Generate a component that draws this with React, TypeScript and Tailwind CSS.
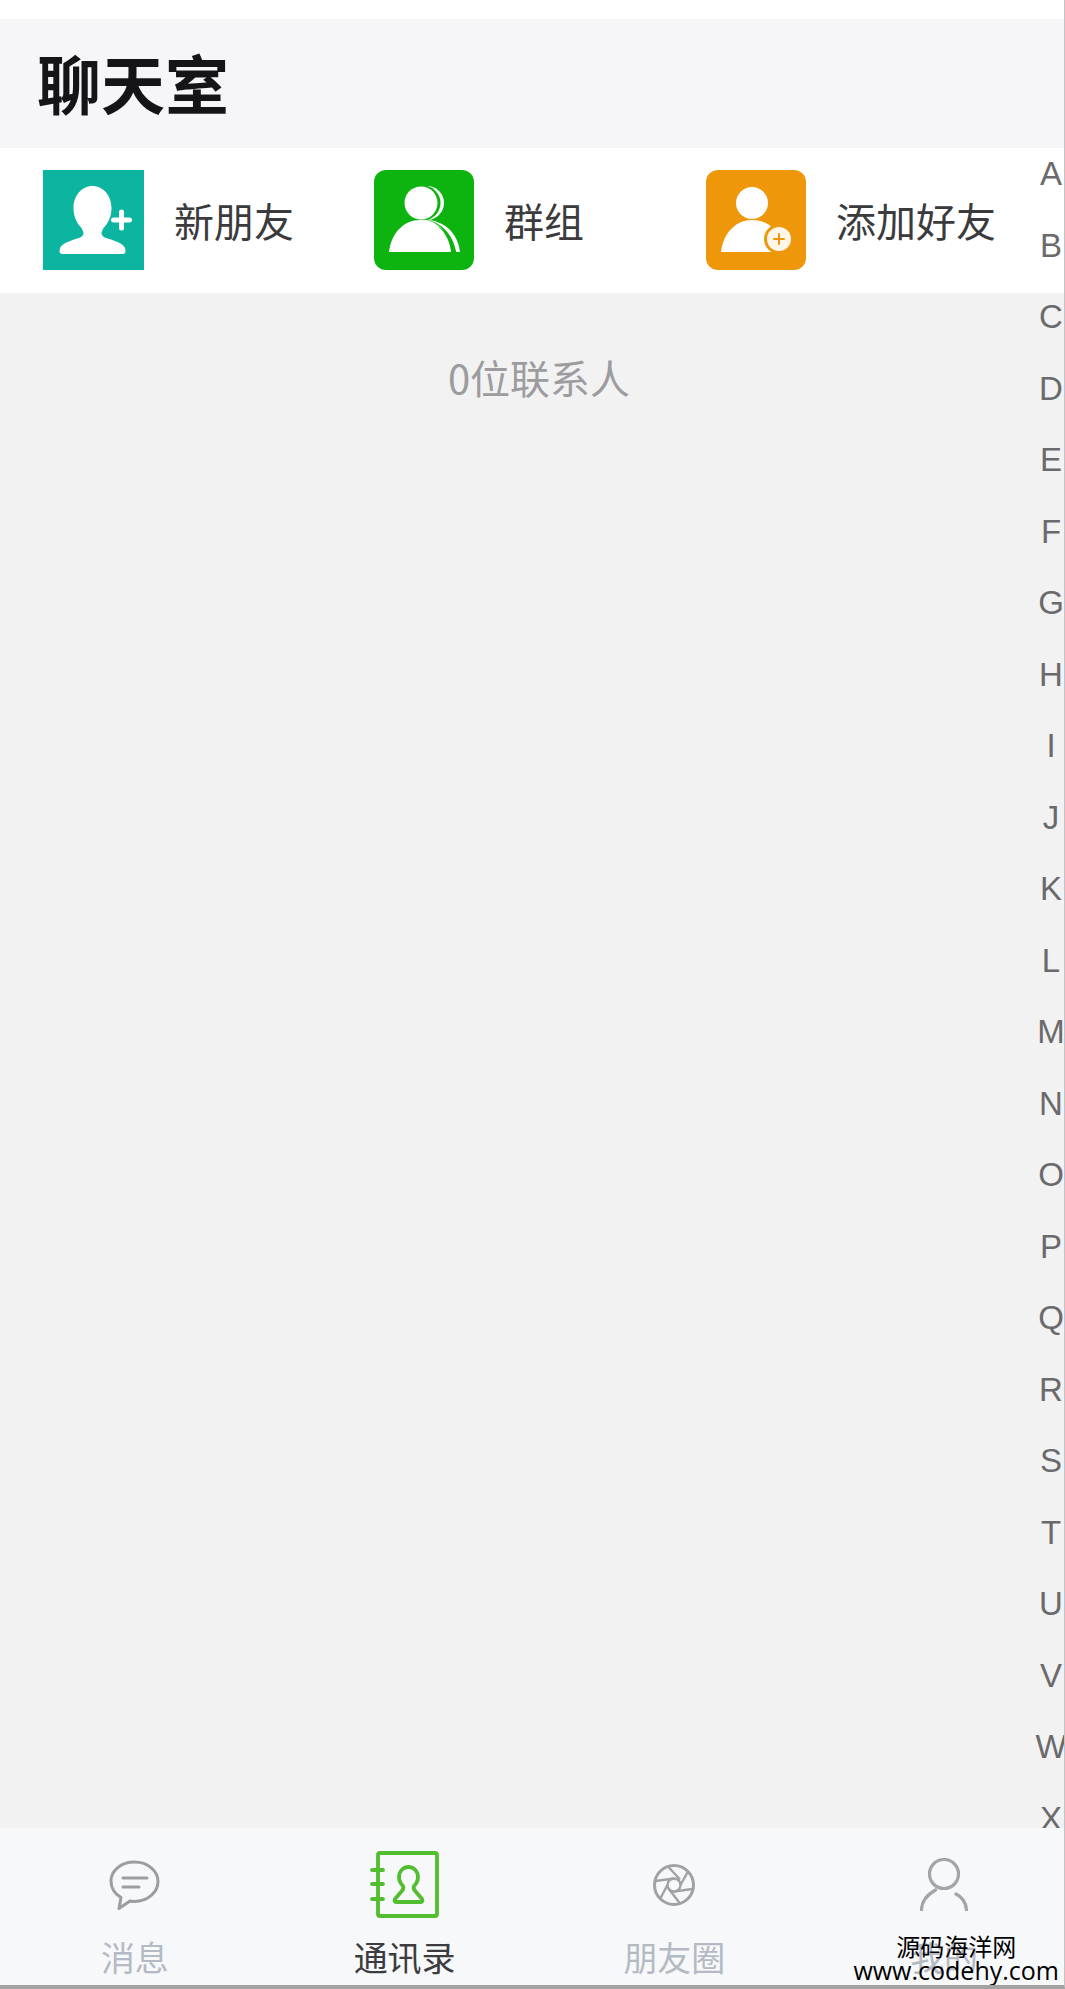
const CJK = "font-['Noto_Sans_CJK_SC','Noto_Sans',sans-serif]";
const letters = "ABCDEFGHIJKLMNOPQRSTUVWXYZ".split("");

function NewFriendIcon() {
  return (
    <svg viewBox="0 0 100 100" className="w-full h-full">
      <path fill="#fff" d="M49 16c-11 0-19 10-19 22 0 8 3 15 8 20 1 2 2 4 2 5 0 3-3 5-8 6-8 3-16 5-16 12 0 2 1 3 3 3h60c2 0 3-1 3-3 0-7-8-9-16-12-5-1-8-3-8-6 0-1 1-3 2-5 5-5 8-12 8-20 0-12-8-22-19-22z" />
      <path stroke="#fff" strokeWidth="5" strokeLinecap="round" d="M70 50h16M78 42v16" />
    </svg>
  );
}

function GroupIcon() {
  return (
    <svg viewBox="0 0 100 100" className="w-full h-full">
      <circle cx="53" cy="33" r="17" fill="#fff" />
      <circle cx="49" cy="33" r="17.500" fill="#0db30f" />
      <circle cx="47" cy="33" r="16.500" fill="#fff" />
      <path fill="#fff" d="M46 50c22-2 38 12 40 32h-4c-3-17-16-29-36-32z" />
      <path fill="#0db30f" d="M46 49c19 1 31 16 33 33h3c-3-18-15-32-36-33z" />
      <path fill="#fff" d="M15 82c2-19 15-32 31-32s29 13 31 32z" />
    </svg>
  );
}

function AddFriendIcon() {
  return (
    <svg viewBox="0 0 100 100" className="w-full h-full">
      <circle cx="46" cy="33" r="16" fill="#fff" />
      <path fill="#fff" d="M15 82c2-19 15-32 31-32 14 0 25 8 30 24l-6 8z" />
      <circle cx="73" cy="69" r="15" fill="#ee970b" />
      <circle cx="73" cy="69" r="12" fill="#fff6e8" />
      <path stroke="#ee970b" strokeWidth="2" strokeLinecap="round" d="M68 69h10M73 64v10" />
    </svg>
  );
}

function ChatIcon() {
  return (
    <svg viewBox="0 0 51 50" className="w-[51px] h-[50px]" fill="none" stroke="#9b9da0" strokeWidth="3">
      <path d="M25.500 2C12 2 2 10.500 2 21c0 7 4 13 10 16.500l-2 11 11-7.500c1 .2 3 .5 4.500 .5C39 41.500 49 32 49 21.500S39 2 25.500 2z" strokeLinejoin="round" />
      <path d="M14 18h24M14 27h16" strokeLinecap="round" />
    </svg>
  );
}

function ContactsIcon() {
  return (
    <svg viewBox="0 0 69 67" className="w-[69px] h-[67px]" fill="none" stroke="#52bd2e" strokeWidth="3.800">
      <rect x="8" y="2" width="59" height="63" rx="2" />
      <path d="M2 19h11M2 33h11M2 48h11" strokeLinecap="round" />
      <path d="M38.500 16c-6 0-9.500 5-9.500 10 0 4 2 7 4 9 1 2 0 4-2 6l-6 7c-1 2 0 3 2 3h23c2 0 3-1 2-3l-6-7c-2-2-3-4-2-6 2-2 4-5 4-9 0-5-3.500-10-9.500-10z" strokeLinejoin="round" />
    </svg>
  );
}

function ApertureIcon() {
  return (
    <svg viewBox="0 0 42 42" className="w-[42px] h-[42px]" fill="none" stroke="#a0a2a5" strokeWidth="2.400">
      <circle cx="21" cy="21" r="19.500" strokeWidth="3" />
      <circle cx="21" cy="21" r="6.500" />
      <path d="M15 2.500 27 15.500M35 7.500 27.500 21M39.500 25 21 27.500M27 39.500 15.500 24.500M7 35 14.500 21M2.500 17 21 14.500" />
    </svg>
  );
}

function PersonIcon() {
  return (
    <svg viewBox="0 0 48 53" className="w-[48px] h-[53px]" fill="none" stroke="#a3a5a8" strokeWidth="3.200" strokeLinecap="round">
      <circle cx="24" cy="16" r="14.500" />
      <path d="M1.500 52c0-8 5-15 14-20M36 36c6 3 10 9 10.500 16" />
    </svg>
  );
}

const tabs = [
  { label: "消息", icon: <ChatIcon />, color: "text-[#b4bac4]" },
  { label: "通讯录", icon: <ContactsIcon />, color: "text-[#3c3c3e]" },
  { label: "朋友圈", icon: <ApertureIcon />, color: "text-[#b4bac4]" },
  { label: "我的", icon: <PersonIcon />, color: "text-[#b4bac4]" },
];

export default function App() {
  return (
    <div className={`${CJK} relative w-[1065px] h-[1989px] overflow-hidden flex flex-col bg-white border-r border-b-4 border-r-[#c4c4c6] border-b-[#a2a2a2]`}>
      <div className="h-[19px] shrink-0 bg-white" />
      <header className="h-[129px] shrink-0 bg-[#f6f6f9] flex items-center pl-[37px] pb-[5px]">
        <h1 className="text-[64px] leading-none font-bold text-[#151518]">聊天室</h1>
      </header>
      <section className="h-[145px] shrink-0 bg-white flex items-center pl-[43px] pb-[2px]">
        <div className="w-[331px] flex items-center gap-[30px]">
          <div className="w-[101px] h-[100px] bg-[#0cb5a0]"><NewFriendIcon /></div>
          <span className="text-[40px] text-[#3b3b3d] leading-none">新朋友</span>
        </div>
        <div className="w-[332px] flex items-center gap-[30px]">
          <div className="w-[100px] h-[100px] rounded-[12px] bg-[#0db30f]"><GroupIcon /></div>
          <span className="text-[40px] text-[#3b3b3d] leading-none">群组</span>
        </div>
        <div className="flex items-center gap-[30px]">
          <div className="w-[100px] h-[100px] rounded-[12px] bg-[#ee970b]"><AddFriendIcon /></div>
          <span className="text-[40px] text-[#3b3b3d] leading-none">添加好友</span>
        </div>
      </section>
      <main className="flex-1 bg-[#f2f2f3] flex justify-center pt-[60px] pl-[14px]">
        <p className="text-[40px] leading-[48px] text-[#9c9c9e] h-[48px]">0位联系人</p>
      </main>
      <nav className="relative z-10 w-[1079px] h-[157px] shrink-0 bg-[#f7f8fa] grid grid-cols-4">
        {tabs.map((t) => (
          <div key={t.label} className="flex flex-col items-center pt-[23px]">
            <div className="h-[67px] flex items-center justify-center">{t.icon}</div>
            <span className={`mt-[16px] text-[34px] leading-[46px] ${t.color}`}>{t.label}</span>
          </div>
        ))}
      </nav>
      <div className="absolute right-[-7px] top-[138px] w-[40px] flex flex-col items-center font-['Liberation_Sans',sans-serif] text-[33px] text-[#6a6a6c]">
        {letters.map((l) => (
          <span key={l} className="h-[71.500px] leading-[71px] shrink-0">{l}</span>
        ))}
      </div>
      <div className="absolute z-20 right-[5px] bottom-[3px] flex flex-col items-center text-black leading-none">
        <span className="text-[24px] leading-[24px]">源码海洋网</span>
        <span className="font-['Open_Sans',sans-serif] text-[25px] leading-[24px]">www.codehy.com</span>
      </div>
    </div>
  );
}
